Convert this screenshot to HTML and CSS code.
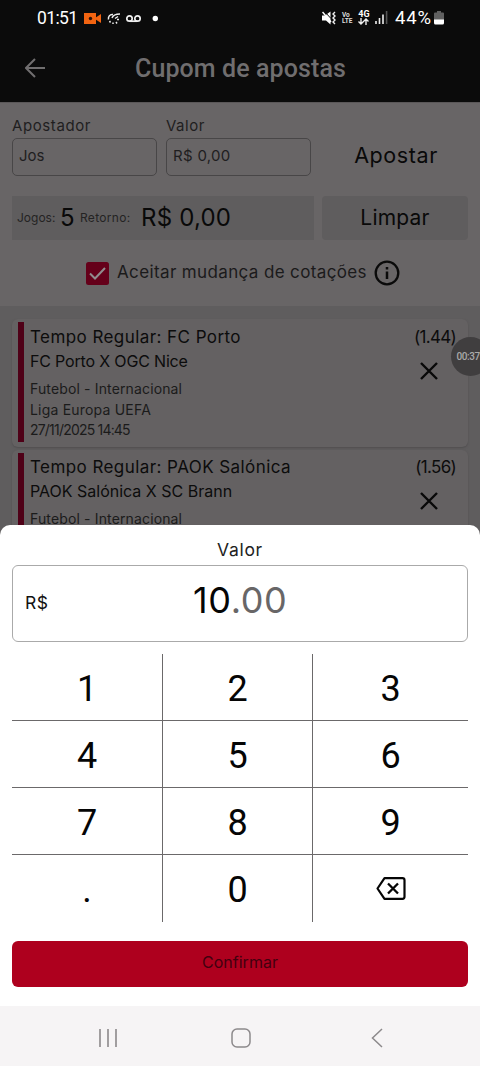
FILE: index.html
```
<!DOCTYPE html>
<html lang="pt-BR">
<head>
<meta charset="utf-8">
<title>Cupom de apostas</title>
<link rel="stylesheet" href="styles.css">
</head>
<body>
<div class="screen">
  <header class="top">
    <div class="status">
      <span class="clock">01:51</span>
      <svg class="status-left" width="76" height="16" viewBox="0 0 76 16">
        <rect x="0" y="3" width="12" height="11" fill="#f26411"/><path d="M11 8l6-4v9l-6-4z" fill="#f26411"/><circle cx="6.500" cy="8.500" r="1.700" fill="#2a1208"/>
        <path d="M29 4.500C25.500 4 24 7 24.500 9.500M25.500 11l1 1.500M29 12.500v1.500M32 12l1 1.500M33 9.500h2M28 8c1-3 4-4 8-4M31 8.500l3-2" fill="none" stroke="#eee" stroke-width="1.500"/>
        <circle cx="45.500" cy="8.500" r="2.700" fill="none" stroke="#eee" stroke-width="1.700"/><circle cx="53.500" cy="8.500" r="2.700" fill="none" stroke="#eee" stroke-width="1.700"/><path d="M45.500 11.200h8" stroke="#eee" stroke-width="1.700"/>
        <circle cx="71.300" cy="8.500" r="2.700" fill="#fff"/>
      </svg>
      <div class="status-right">
        <svg width="14" height="14" viewBox="0 0 14 14"><path d="M0 4.500h3l5.500-4v13L4 9.500H0z" fill="#fff"/><path d="M2.500 .5l6.500 7" stroke="#0b0b0b" stroke-width="1"/><path d="M.5 1l8.500 10" stroke="#fff" stroke-width="1.500"/><path d="M13 1l-2 2 2 2-2 2 2 2-2 2 2 2" fill="none" stroke="#eee" stroke-width="1.400"/></svg>
        <span class="lte"><b>Vo</b><b>LTE</b></span>
        <span class="g4"><b>4G</b><svg width="11" height="7" viewBox="0 0 11 7"><path d="M3 0v6M.5 3.500L3 6l2.500-2.500M8 7V1M5.500 3.500L8 1l2.500 2.500" fill="none" stroke="#eee" stroke-width="1.400"/></svg></span>
        <svg class="signal" width="13" height="13" viewBox="0 0 13 13"><path d="M1 10v3M4.500 7v6M8 3.500V13" stroke="#eee" stroke-width="1.600"/><path d="M11.600 0v13" stroke="#555" stroke-width="1.600"/></svg>
        <span class="pct">44%</span>
        <svg width="10" height="14" viewBox="0 0 10 14"><path d="M3 0h4v1.500h2q1 0 1 1V9H0V2.500q0-1 1-1h2z" fill="#606060"/><path d="M0 8.500h10V12q0 1.500-1.500 1.500h-7Q0 13.500 0 12z" fill="#fff"/></svg>
      </div>
    </div>
    <div class="bar">
      <svg class="back" width="20" height="20" viewBox="0 0 20 20"><path d="M20 10H1.500M10 1L1 10l9 9" fill="none" stroke="#706e6f" stroke-width="2"/></svg>
      <h1>Cupom de apostas</h1>
    </div>
  </header>

  <section class="form">
    <div class="fields">
      <label><span class="lab1">Apostador</span><span class="input"><span class="jos">Jos</span></span></label>
      <label><span class="lab2">Valor</span><span class="input"><span class="zero">R$ 0,00</span></span></label>
      <div class="bet"><span>Apostar</span></div>
    </div>
    <div class="summary">
      <div class="totals"><span class="s1">Jogos:</span><span class="s2">5</span><span class="s3">Retorno:</span><span class="s4">R$ 0,00</span></div>
      <div class="clear"><span>Limpar</span></div>
    </div>
    <div class="accept">
      <svg width="23" height="23" viewBox="0 0 23 23"><rect width="23" height="23" rx="2.500" fill="#65001a"/><path d="M4 11.500l5 5L19 6" fill="none" stroke="#918c8e" stroke-width="2"/></svg>
      <span class="accept-text">Aceitar mudança de cotações</span>
      <svg width="26" height="26" viewBox="0 0 26 26"><circle cx="13" cy="13" r="11.300" fill="none" stroke="#0a0a0a" stroke-width="2.300"/><path d="M13 11.500V19M13 7v2.600" stroke="#0a0a0a" stroke-width="2.500"/></svg>
    </div>
  </section>

  <section class="list">
    <article class="card">
      <div class="info">
        <div class="pick">Tempo Regular: FC Porto</div>
        <div class="match tight">FC Porto X OGC Nice</div>
        <div class="meta sport">Futebol - Internacional</div>
        <div class="meta league">Liga Europa UEFA</div>
        <div class="meta date">27/11/2025 14:45</div>
      </div>
      <div class="odds"><span>(1.44)</span><svg width="18" height="18" viewBox="0 0 18 18"><path d="M1 1l16 16M17 1L1 17" stroke="#080808" stroke-width="2.400"/></svg></div>
    </article>
    <article class="card next">
      <div class="info">
        <div class="pick">Tempo Regular: PAOK Salónica</div>
        <div class="match">PAOK Salónica X SC Brann</div>
        <div class="meta sport">Futebol - Internacional</div>
      </div>
      <div class="odds"><span>(1.56)</span><svg width="18" height="18" viewBox="0 0 18 18"><path d="M1 1l16 16M17 1L1 17" stroke="#080808" stroke-width="2.400"/></svg></div>
    </article>
  </section>

  <div class="recorder">00:37</div>

  <section class="sheet">
    <div class="sheet-title"><span>Valor</span></div>
    <div class="amount"><span class="cur">R$</span><span class="num">10<i>.00</i></span></div>
    <div class="keys">
      <div>1</div><div>2</div><div>3</div>
      <div>4</div><div>5</div><div>6</div>
      <div>7</div><div>8</div><div>9</div>
      <div>.</div><div>0</div>
      <div><svg width="30" height="23" viewBox="0 0 30 23"><path d="M8.500 1.200h18q2 0 2 2v16.600q0 2-2 2h-18L1.500 11.500z" fill="none" stroke="#050505" stroke-width="2.200" stroke-linejoin="round"/><path d="M12 6.500l10 10M22 6.500l-10 10" stroke="#050505" stroke-width="2.300"/></svg></div>
    </div>
    <div class="confirm"><span>Confirmar</span></div>
    <nav>
      <svg width="20" height="20" viewBox="0 0 20 20"><path d="M2 1v18M10 1v18M18 1v18" stroke="#8c898b" stroke-width="1.600"/></svg>
      <svg class="home" width="20" height="20" viewBox="0 0 20 20"><rect x="1" y="1" width="18" height="18" rx="5" fill="none" stroke="#8c898b" stroke-width="1.500"/></svg>
      <svg width="12" height="20" viewBox="0 0 12 20"><path d="M11 1L1.500 10l9.500 9" fill="none" stroke="#8c898b" stroke-width="1.500"/></svg>
    </nav>
  </section>
</div>
</body>
</html>
```
FILE: styles.css
```
* { box-sizing: border-box; }
body { margin: 0; }
.screen {
  position: relative; width: 480px; height: 1066px; overflow: hidden;
  background: #5f5d5e; color: #111; font-family: Inter, "Liberation Sans", sans-serif; white-space: nowrap;
}
svg { display: block; flex: none; }

.top { height: 103px; background: #0b0b0b; border-bottom: 1px solid #5a5758; }
.status { height: 34px; padding: 1px 36px 0 37px; display: flex; align-items: center; color: #fff; font-family: Roboto, sans-serif; }
.clock { width: 47px; font-size: 17.500px; letter-spacing: -.6px; }
.status-right { margin-left: auto; display: flex; align-items: center; }
.lte { margin-left: 6px; width: 12px; display: flex; flex-direction: column; font-size: 6.500px; line-height: 6px; color: #ddd; }
.g4 { margin-left: 4px; width: 12px; display: flex; flex-direction: column; align-items: center; font-size: 9px; line-height: 8px; }
.signal { margin-left: 5px; }
.pct { margin: 0 2px 0 7px; font-size: 18.500px; letter-spacing: .9px; }
.bar { display: flex; align-items: center; height: 68px; padding-left: 25px; }
.bar h1 { margin: 2px 0 0 90px; font: 500 25px/30px Roboto, sans-serif; color: #706e6f; letter-spacing: .1px; }

.form { height: 203px; padding: 13px 12px 0; background: #686566; }
.fields { display: grid; grid-template-columns: 145px 145px 1fr; column-gap: 9px; }
.fields label { display: flex; flex-direction: column; font-size: 15px; line-height: 20px; color: #1f1e1f; }
.lab1 { letter-spacing: .6px; }
.lab2 { letter-spacing: .5px; }
.input { display: flex; align-items: center; height: 38px; margin-top: 2px; padding: 0 6px 2px; border: 1.500px solid #484647; border-radius: 5px; }
.zero { letter-spacing: .3px; }
.bet { display: flex; align-items: center; justify-content: center; height: 38px; margin: 20px 9px 0 13px; font-size: 21.500px; letter-spacing: .6px; color: #090909; }
.summary { display: flex; gap: 8px; margin-top: 20px; height: 44px; }
.totals { width: 302px; padding: 0 5px 2px; background: #5f5d5e; display: flex; align-items: center; font-size: 12px; color: #242323; }
.s1 { width: 43px; }
.s2 { width: 20px; font-size: 24px; color: #090909; }
.s3 { width: 61px; letter-spacing: .3px; }
.s4 { font-size: 24px; letter-spacing: .2px; color: #090909; }
.clear { flex: 1; padding-bottom: 2px; background: #5f5d5e; border-radius: 4px; display: flex; align-items: center; justify-content: center; font-size: 21px; letter-spacing: .2px; color: #090909; }
.accept { display: flex; align-items: center; height: 26px; margin: 20px 0 0 74px; }
.accept-text { width: 249px; margin: 0 8px 0 8px; padding-bottom: 2px; font-size: 17px; letter-spacing: .37px; color: #1b1a1b; }

.list { padding: 13px 12px 0; display: flex; flex-direction: column; gap: 3px; }
.card { display: flex; justify-content: space-between; height: 128px; padding: 3px 12px 5px 6px; border-radius: 6px; background: #646162; box-shadow: 0 1px 2px #504e4f; }
.info { border-left: 6px solid #4f0017; padding: 3px 0 0 6px; }
.pick { font-size: 17px; line-height: 24px; letter-spacing: .43px; color: #0c0c0c; }
.match { font-size: 16px; line-height: 24px; color: #0c0c0c; }
.tight { letter-spacing: -.17px; }
.meta { font-size: 14px; line-height: 20.500px; color: #1b1b1b; }
.sport { margin-top: 6px; letter-spacing: .14px; }
.league { letter-spacing: .2px; }
.date { letter-spacing: -.8px; }
.odds { display: flex; flex-direction: column; align-items: flex-end; padding-top: 3px; font-size: 17px; line-height: 24px; letter-spacing: -.7px; color: #0c0c0c; }
.odds svg { margin: 13px 18px 0 0; }
.next .info, .next .odds { padding-top: 2px; }

.recorder { position: absolute; left: 451px; top: 337px; width: 39px; height: 39px; padding-left: 5.500px; border-radius: 50%; background: #403e3f; color: #aaa; font: 500 10px/39px Roboto, sans-serif; letter-spacing: -.4px; }

.sheet { position: absolute; left: 0; right: 0; top: 525px; height: 541px; border-radius: 10px 10px 0 0; background: #fff; overflow: hidden; }
.sheet-title { margin-top: 13px; text-align: center; font-size: 17.500px; line-height: 24px; letter-spacing: .7px; color: #222; }
.amount { display: flex; align-items: center; height: 77px; margin: 3px 12px 0; padding: 0 0 3px 12px; border: 1.500px solid #aaa; border-radius: 6px; }
.cur { width: 168px; font-size: 17.500px; letter-spacing: .5px; color: #111; }
.num { padding-bottom: 4px; font-size: 36px; letter-spacing: .6px; color: #050505; }
.num i { font-style: normal; color: #686667; }
.keys { display: grid; grid-template-columns: 151px 150px 155px; grid-template-rows: repeat(3, 67px) 67px; margin: 12px 12px 0; font: 36px/71px Roboto, sans-serif; color: #050505; text-align: center; }
.keys div { height: 67px; border-right: 1px solid #6b696a; border-bottom: 1px solid #6b696a; }
.keys div:nth-child(3n) { border-right: 0; }
.keys div:nth-child(n+10) { border-bottom: 0; }
.keys svg { margin: 22px auto 0; }
.confirm { height: 46px; margin: 19px 12px 0; border-radius: 6px; background: #ae001e; display: flex; justify-content: center; padding-bottom: 4px; align-items: center; font-size: 16px; color: #42000f; }
nav { display: flex; align-items: center; height: 61px; margin-top: 19px; padding: 3px 97px 0 98px; justify-content: space-between; background: #f6f4f5; }
.home { margin-right: 7px; }
```
